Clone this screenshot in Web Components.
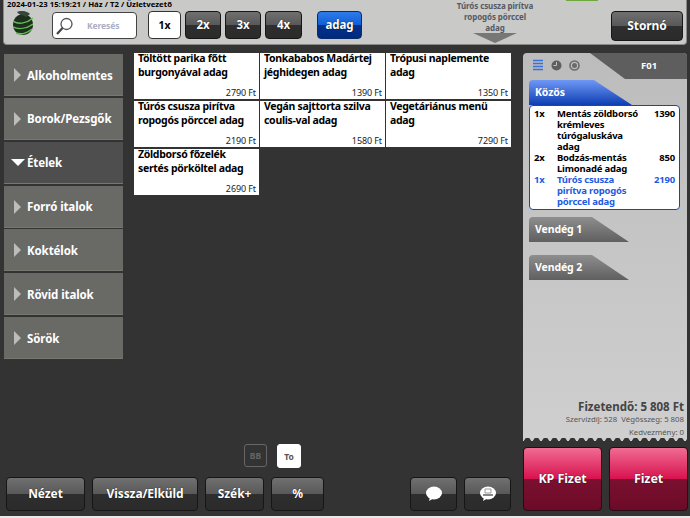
<!DOCTYPE html>
<html>
<head>
<meta charset="utf-8">
<title>POS</title>
<style>
html, body { margin: 0; padding: 0; height: 100%; background: #333; overflow: hidden; }
body { font-family: "Noto Sans", sans-serif; }
</style>
</head>
<body>
<pos-app></pos-app>

<script>
class PosBtn extends HTMLElement {
    constructor() {
        super();
        this.attachShadow({mode: 'open'});
        this.shadowRoot.innerHTML = `
            <style>
            :host {
                display: flex;
                align-items: center;
                justify-content: center;
                box-sizing: border-box;
                padding-bottom: 1px;
                border: 1px solid #161616;
                border-radius: 4px;
                color: #fff;
                font: bold 12px "Noto Sans", sans-serif;
                letter-spacing: -0.1px;
                background: linear-gradient(#707070 0, #585858 50%, #2e2e2e 50%, #2b2b2b 100%);
                text-shadow: 0 0 1px #000;
            }
            :host([look='white']) {
                background: #fff;
                color: #000;
                border-color: #333;
                text-shadow: none;
            }
            :host([look='blue']) {
                background: linear-gradient(#2f7bea 0, #0f5fd6 50%, #03318f 50%, #012a7c 100%);
                border-color: #0a2a6a;
            }
            :host([look='red']) {
                background: linear-gradient(#f06c92 0, #d8124f 50%, #7c1030 50%, #6b0b28 100%);
                border-color: #2a0a14;
            }
            </style>
            <slot></slot>
        `
    }
}

class PosCategory extends HTMLElement {
    constructor() {
        super();
        this.attachShadow({mode: 'open'});
        this.shadowRoot.innerHTML = `
            <style>
            :host {
                display: flex;
                align-items: center;
                box-sizing: border-box;
                height: 42px;
                padding: 1px 0 0 10px;
                background: #696966;
                color: #fff;
                font: bold 11.5px "Noto Sans", sans-serif;
                letter-spacing: -0.1px;
                border-bottom: 1px solid #77776f;
            }
            :host([open]) { background: #4e4e4e; }
            .arrow {
                width: 0;
                height: 0;
                margin-right: 6px;
                border-top: 7px solid transparent;
                border-bottom: 7px solid transparent;
                border-left: 7px solid #bcbcb8;
            }
            :host([open]) .arrow {
                margin-left: -3px;
                margin-right: 2px;
                border-left: 7px solid transparent;
                border-right: 7px solid transparent;
                border-top: 7px solid #fff;
                border-bottom: 0;
            }
            </style>
            <span class="arrow"></span><slot></slot>
        `
    }
}

class PosProduct extends HTMLElement {
    constructor() {
        super();
        this.attachShadow({mode: 'open'});
        this.shadowRoot.innerHTML = `
            <style>
            :host {
                display: flex;
                flex-direction: column;
                justify-content: space-between;
                box-sizing: border-box;
                height: 46px;
                padding: 0 3px 0 4px;
                background: #fff;
                color: #000;
            }
            .name { margin-top: -1px; font: bold 10.5px/13.5px "Noto Sans", sans-serif; letter-spacing: -0.3px; }
            .price { text-align: right; font: 9px/12px "Noto Sans", sans-serif; letter-spacing: -0.1px; color: #222; }
            </style>
            <div class="name"><slot></slot></div>
            <div class="price"></div>
        `
    }

    connectedCallback() {
        this.shadowRoot.querySelector('.price').textContent = this.getAttribute('price');
    }
}

class PosLine extends HTMLElement {
    constructor() {
        super();
        this.attachShadow({mode: 'open'});
        this.shadowRoot.innerHTML = `
            <style>
            :host {
                display: grid;
                grid-template-columns: 23px 1fr 30px;
                color: #000;
                font: bold 9.5px/11px "Noto Sans", sans-serif;
                letter-spacing: -0.2px;
            }
            :host([active]) { color: #1d5be0; }
            .price { text-align: right; }
            .name { max-width: 82px; }
            </style>
            <div class="qty"></div>
            <div class="name"><slot></slot></div>
            <div class="price"></div>
        `
    }

    connectedCallback() {
        this.shadowRoot.querySelector('.qty').textContent = this.getAttribute('qty');
        this.shadowRoot.querySelector('.price').textContent = this.getAttribute('price');
    }
}

class PosTab extends HTMLElement {
    constructor() {
        super();
        this.attachShadow({mode: 'open'});
        this.shadowRoot.innerHTML = `
            <style>
            :host {
                display: flex;
                align-items: center;
                box-sizing: border-box;
                width: 100px;
                height: 25px;
                padding: 0 0 2px 6px;
                color: #fff;
                font: bold 10.5px "Noto Sans", sans-serif;
                letter-spacing: -0.1px;
                background: linear-gradient(#8e8e8e, #5f5f5f);
                clip-path: polygon(0 0, 63% 0, 100% 100%, 0 100%);
                border-top-left-radius: 4px;
            }
            :host([active]) {
                width: 103px;
                background: linear-gradient(#6f98f6, #0d3eb2);
            }
            </style>
            <slot></slot>
        `
    }
}

class PosTopBar extends HTMLElement {
    constructor() {
        super();
        this.attachShadow({mode: 'open'});
        this.shadowRoot.innerHTML = `
            <style>
            :host {
                display: block;
                box-sizing: border-box;
                height: 45px;
                margin: 0 3px;
                background: #c9c9c7;
                border: 1px solid #8a8a8a;
                border-top: 0;
                border-radius: 0 0 4px 4px;
                position: relative;
            }
            .stamp {
                position: absolute;
                left: 3px;
                top: -1px;
                font: bold 7.8px/11px "Noto Sans", sans-serif;
                color: #000;
                white-space: nowrap;
            }
            .strip {
                position: absolute;
                left: 562px;
                top: 0;
                width: 32px;
                height: 1px;
                background: #6fa83c;
            }
            .row {
                display: flex;
                align-items: flex-start;
                padding: 11px 0 0 9px;
            }
            .logo { width: 20px; height: 24px; margin-right: 19px; flex: none; }
            .search {
                display: flex;
                align-items: center;
                box-sizing: border-box;
                width: 85px;
                height: 27px;
                margin-top: 1px;
                background: #fff;
                border: 1px solid #444;
                border-radius: 4px;
                color: #a9aec4;
                font: bold 8.5px "Noto Sans", sans-serif;
                letter-spacing: -0.1px;
            }
            .search svg { margin-left: 2px; margin-right: 13px; }
            .qty { display: flex; gap: 4px; margin-left: 11px; }
            .qty pos-btn { height: 28px; font-size: 11.5px; }
            .hint {
                width: 90px;
                margin-left: 88px;
                margin-top: -11px;
                text-align: center;
                font: bold 8px/11px "Noto Sans", sans-serif;
                letter-spacing: -0.1px;
                color: #555a64;
            }
            .hint i {
                display: block;
                width: 0;
                height: 0;
                margin: 0 auto;
                border-left: 22px solid transparent;
                border-right: 22px solid transparent;
                border-top: 10px solid #777;
            }
            .end { margin-left: auto; margin-right: 3px; }
            </style>
            <div class="stamp">2024-01-23 15:19:21 / Ház / T2 / Üzletvezető</div>
            <div class="strip"></div>
            <div class="row">
                <svg class="logo" viewBox="0 0 20 24">
                    <path d="M10 3 C16 3 20 8 20 14 C20 20 15 24 10 24 C5 24 0 20 0 14 C0 8 4 3 10 3Z" fill="#1f2f1f"/>
                    <path d="M4 1 C8 -1 14 0 17 3 L13 6 C10 4 6 4 4 1Z" fill="#33463a"/>
                    <path d="M0 10 C6 14 14 12 20 7 M0 16 C6 19 14 17 20 13 M3 22 C8 24 14 22 19 18" fill="none" stroke="#5fc050" stroke-width="1.5"/>
                </svg>
                <div class="search">
                    <svg width="19" height="20" viewBox="0 0 19 20">
                        <circle cx="11.5" cy="8" r="5.5" fill="none" stroke="#555" stroke-width="1.3"/>
                        <path d="M7.5 12 L2 18" stroke="#444" stroke-width="2.2"/>
                    </svg>
                    Keresés
                </div>
                <div class="qty">
                    <pos-btn look="white" style="width:33px;font-size:10.5px">1x</pos-btn>
                    <pos-btn style="width:36px">2x</pos-btn>
                    <pos-btn style="width:36px">3x</pos-btn>
                    <pos-btn style="width:37px">4x</pos-btn>
                </div>
                <pos-btn look="blue" style="width:45px;height:28px;margin-left:15px;font-size:11.5px">adag</pos-btn>
                <div class="hint">Túrós csusza pirítva<br>ropogós pörccel<br>adag<i></i></div>
                <pos-btn class="end" style="width:72px;height:30px">Stornó</pos-btn>
            </div>
        `
    }
}

class PosOrder extends HTMLElement {
    constructor() {
        super();
        this.attachShadow({mode: 'open'});
        this.shadowRoot.innerHTML = `
            <style>
            :host {
                display: flex;
                flex-direction: column;
                box-sizing: border-box;
                height: 388px;
                background: linear-gradient(#bcbcbc, #cfcfcf);
                border-radius: 4px 4px 0 0;
                position: relative;
            }
            .head {
                display: flex;
                align-items: center;
                height: 27px;
                position: relative;
                color: #fff;
                flex: none;
            }
            .head .shape { position: absolute; left: 0; top: 0; width: 100%; height: 100%; }
            .head .icons { position: relative; display: flex; align-items: center; gap: 7px; margin-left: 9px; margin-top: -3px; }
            .head b { position: absolute; left: 118px; top: 6px; font: bold 9.5px "Noto Sans", sans-serif; }
            .tabs { padding: 0 7px 0 6px; display: flex; flex-direction: column; }
            .list {
                box-sizing: border-box;
                height: 105px;
                padding: 2px 4px 0 4px;
                background: #fff;
                border: 1px solid #1c46ad;
                border-radius: 4px;
                margin-bottom: 7px;
            }
            .guest { margin-bottom: 13px; }
            .sum {
                margin-top: auto;
                margin-bottom: -1px;
                padding: 0 3px 0 0;
                text-align: right;
                color: #555;
            }
            .total { font: bold 11.5px/14px "Noto Sans", sans-serif; color: #444; }
            .small { font: 7.8px/11px "Noto Sans", sans-serif; }
            .discount { margin-top: 2px; }
            .teeth {
                flex: none;
                height: 4px;
                background: radial-gradient(circle at 50% 100%, #333 3px, transparent 3.5px) 0 0 / 9px 4px repeat-x;
            }
            </style>
            <div class="head">
                <svg class="shape" viewBox="0 0 164 27" preserveAspectRatio="none">
                    <path d="M67 0 H160 Q164 0 164 4 V26 H102Z" fill="#5e5e5e"/>
                </svg>
                <div class="icons">
                    <svg width="12" height="12" viewBox="0 0 12 12"><path d="M1 1.5H11M1 4.5H11M1 7.5H11M1 10.5H11" stroke="#3a70d8" stroke-width="1.4"/></svg>
                    <svg width="11" height="11" viewBox="0 0 11 11"><circle cx="5.5" cy="5.5" r="5" fill="#5f5f5f"/><path d="M5.5 2V5.5H2.5" stroke="#c4c4c4" stroke-width="1" fill="none"/></svg>
                    <svg width="11" height="11" viewBox="0 0 11 11"><circle cx="5.5" cy="5.5" r="4.5" fill="none" stroke="#6a6a6a" stroke-width="1.6"/><circle cx="5.5" cy="5.5" r="2.5" fill="#6a6a6a"/></svg>
                </div>
                <b>F01</b>
            </div>
            <div class="tabs">
                <pos-tab active>Közös</pos-tab>
                <div class="list">
                    <pos-line qty="1x" price="1390">Mentás zöldborsó krémleves túrógaluskáva adag</pos-line>
                    <pos-line qty="2x" price="850">Bodzás-mentás Limonadé adag</pos-line>
                    <pos-line qty="1x" price="2190" active>Túrós csusza pirítva ropogós pörccel adag</pos-line>
                </div>
                <pos-tab class="guest">Vendég 1</pos-tab>
                <pos-tab class="guest">Vendég 2</pos-tab>
            </div>
            <div class="sum">
                <div class="total">Fizetendő: 5 808 Ft</div>
                <div class="small">Szervízdíj: 528 &nbsp;Végösszeg: 5 808</div>
                <div class="small discount">Kedvezmény: 0</div>
            </div>
            <div class="teeth"></div>
        `
    }
}

class PosApp extends HTMLElement {
    constructor() {
        super();
        this.attachShadow({mode: 'open'});
        this.shadowRoot.innerHTML = `
            <style>
            :host {
                display: block;
                box-sizing: border-box;
                width: 690px;
                height: 518px;
                background: #333;
                border-bottom: 2px solid #e8e8e8;
            }
            .main {
                display: grid;
                grid-template-columns: 119px 377px 164px;
                column-gap: 11px;
                padding: 8px 0 0 4px;
                position: relative;
            }
            .cats { display: flex; flex-direction: column; gap: 1.85px; margin-top: 1px; }
            .grid {
                display: grid;
                grid-template-columns: repeat(3, 125px);
                grid-auto-rows: 46px;
                gap: 2px 1px;
                align-content: start;
            }
            .right { margin-left: 1px; width: 164px; }
            .foot {
                display: flex;
                align-items: flex-end;
                height: 64px;
                position: absolute;
                left: 6px;
                top: 447px;
                width: 506px;
            }
            .foot pos-btn { height: 34px; }
            .foot .gap { margin-left: 7px; }
            .mode {
                position: absolute;
                left: 238px;
                top: -3px;
                display: flex;
                gap: 10px;
            }
            .mode span {
                display: flex;
                align-items: center;
                justify-content: center;
                box-sizing: border-box;
                width: 23px;
                height: 23px;
                border: 1px solid #666;
                border-radius: 3px;
                font: bold 8.5px "Noto Sans", sans-serif;
                color: #666;
            }
            .mode span.on { background: #fff; border-color: #fff; color: #555; width: 24px; height: 24px; }
            .pay {
                display: flex;
                gap: 7px;
                position: absolute;
                left: 523px;
                top: 447px;
            }
            .pay pos-btn { width: 79px; height: 64px; font-size: 12.5px; }
            </style>
            <pos-top-bar></pos-top-bar>
            <div class="main">
                <div class="cats">
                    <pos-category>Alkoholmentes</pos-category>
                    <pos-category>Borok/Pezsgők</pos-category>
                    <pos-category open>Ételek</pos-category>
                    <pos-category>Forró italok</pos-category>
                    <pos-category>Koktélok</pos-category>
                    <pos-category>Rövid italok</pos-category>
                    <pos-category>Sörök</pos-category>
                </div>
                <div class="grid">
                    <pos-product price="2790 Ft">Töltött parika főtt burgonyával adag</pos-product>
                    <pos-product price="1390 Ft">Tonkababos Madártej jéghidegen adag</pos-product>
                    <pos-product price="1350 Ft">Trópusi naplemente adag</pos-product>
                    <pos-product price="2190 Ft">Túrós csusza pirítva ropogós pörccel adag</pos-product>
                    <pos-product price="1580 Ft">Vegán sajttorta szilva coulis-val adag</pos-product>
                    <pos-product price="7290 Ft">Vegetáriánus menü adag</pos-product>
                    <pos-product price="2690 Ft">Zöldborsó főzelék sertés pörköltel adag</pos-product>
                </div>
                <div class="right"><pos-order></pos-order></div>
            </div>
            <div class="foot">
                <div class="mode"><span>BB</span><span class="on">To</span></div>
                <pos-btn style="width:79px">Nézet</pos-btn>
                <pos-btn class="gap" style="width:106px">Vissza/Elküld</pos-btn>
                <pos-btn class="gap" style="width:59px">Szék+</pos-btn>
                <pos-btn class="gap" style="width:53px">%</pos-btn>
                <pos-btn style="width:47px;margin-left:86px">
                    <svg width="18" height="16" viewBox="0 0 18 16"><ellipse cx="9" cy="7" rx="8" ry="6.5" fill="#fff"/><path d="M5 11 L4 15 L9 12Z" fill="#fff"/></svg>
                </pos-btn>
                <pos-btn class="gap" style="width:47px">
                    <svg width="18" height="16" viewBox="0 0 18 16"><ellipse cx="9" cy="7" rx="8" ry="6.5" fill="#fff"/><path d="M5 11 L4 15 L9 12Z" fill="#fff"/><path d="M6 3H12V7H6Z" fill="none" stroke="#999"/><path d="M4 8H14V10H4Z" fill="#888"/></svg>
                </pos-btn>
            </div>
            <div class="pay">
                <pos-btn look="red">KP Fizet</pos-btn>
                <pos-btn look="red">Fizet</pos-btn>
            </div>
        `
    }
}

customElements.define('pos-btn', PosBtn);
customElements.define('pos-category', PosCategory);
customElements.define('pos-product', PosProduct);
customElements.define('pos-line', PosLine);
customElements.define('pos-tab', PosTab);
customElements.define('pos-top-bar', PosTopBar);
customElements.define('pos-order', PosOrder);
customElements.define('pos-app', PosApp);
</script>
</body>
</html>
